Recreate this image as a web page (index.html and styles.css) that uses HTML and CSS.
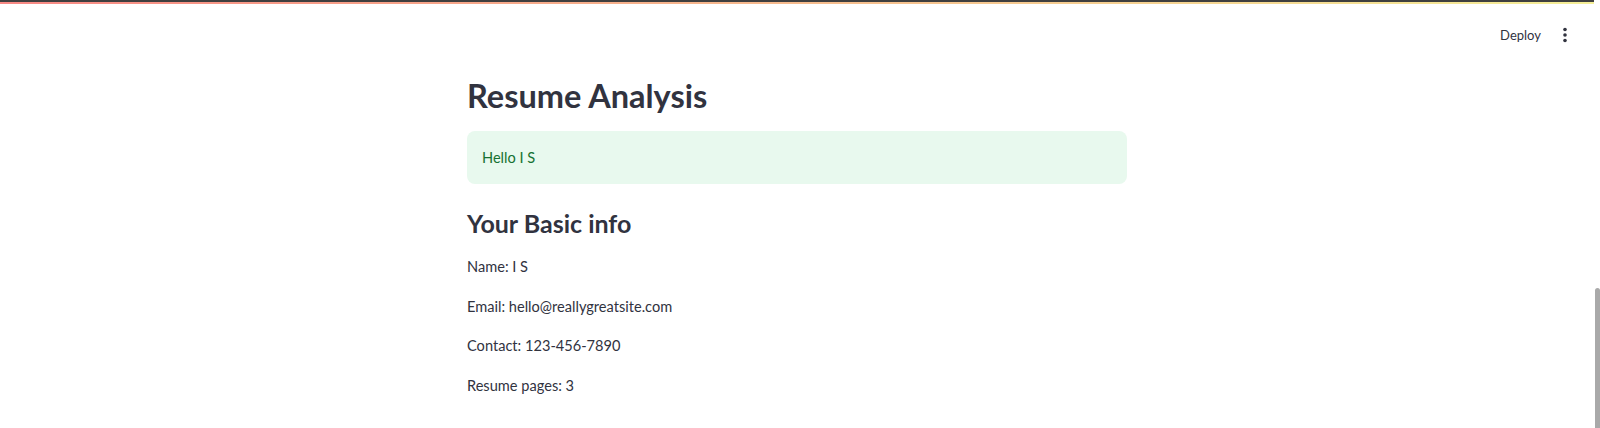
FILE: index.html
```html
<!DOCTYPE html>
<html lang="en">
<head>
<meta charset="utf-8">
<title>Resume Analysis</title>
<link rel="stylesheet" href="styles.css">
</head>
<body>
<div class="app">
  <div class="viewport">
    <div class="decor"><div class="decor-dark"></div><div class="decor-grad"></div></div>
    <header class="header">
      <span class="deploy">Deploy</span>
      <span class="menu" aria-label="menu">
        <svg width="4" height="16" viewBox="0 0 4 16"><circle cx="2" cy="2.5" r="1.8" fill="#31333f"/><circle cx="2" cy="8" r="1.8" fill="#31333f"/><circle cx="2" cy="13.5" r="1.8" fill="#31333f"/></svg>
      </span>
    </header>
    <main class="main">
      <div class="block">
        <h1 class="title">Resume Analysis</h1>
        <div class="alert">Hello I S</div>
        <h2 class="subtitle">Your Basic info</h2>
        <p class="line">Name: I S</p>
        <p class="line">Email: hello@reallygreatsite.com</p>
        <p class="line">Contact: 123-456-7890</p>
        <p class="line">Resume pages: 3</p>
      </div>
    </main>
  </div>
  <div class="scrolltrack"><div class="thumb"></div></div>
</div>
</body>
</html>
```

FILE: styles.css
```css
html, body {
  margin: 0;
  padding: 0;
  background: #ffffff;
  height: 428px;
  overflow: hidden;
}
body {
  font-family: "Source Sans Pro", Lato, "Noto Sans", sans-serif;
  color: #31333f;
}
.app {
  display: grid;
  grid-template-columns: 1fr 6px;
  height: 428px;
}
.viewport {
  display: flex;
  flex-direction: column;
  min-width: 0;
}
.decor-dark {
  height: 2px;
  background: #3f3f3f;
}
.decor-grad {
  height: 2px;
  background: linear-gradient(90deg, #f6746f, #f2eb84);
  opacity: 0.85;
}
.header {
  height: 62px;
  display: flex;
  align-items: center;
  justify-content: flex-end;
  padding-right: 27px;
  gap: 22px;
}
.deploy {
  font-size: 13px;
  color: #31333f;
}
.menu {
  display: flex;
  align-items: center;
  width: 4px;
}
.main {
  display: flex;
  justify-content: center;
}
.block {
  width: 660px;
  padding-top: 8px;
}
.title {
  margin: 0;
  font-size: 32.5px;
  font-weight: 700;
  line-height: 44px;
  color: #31333f;
}
.alert {
  margin-top: 13px;
  height: 53px;
  box-sizing: border-box;
  padding: 0 15px;
  display: flex;
  align-items: center;
  background: #e8f9ee;
  border-radius: 8px;
  color: #177233;
  font-size: 14.6px;
}
.subtitle {
  margin: 22px 0 0;
  font-size: 25px;
  font-weight: 700;
  line-height: 34px;
  color: #31333f;
}
.line {
  margin: 0;
  font-size: 14.6px;
  line-height: 39.5px;
  color: #31333f;
}
.subtitle + .line {
  margin-top: 7px;
}
.scrolltrack {
  background: #ffffff;
}
.thumb {
  margin-top: 288px;
  height: 140px;
  width: 5px;
  margin-left: 1px;
  background: #a9a9a9;
  border-radius: 3px 3px 0 0;
}
```
